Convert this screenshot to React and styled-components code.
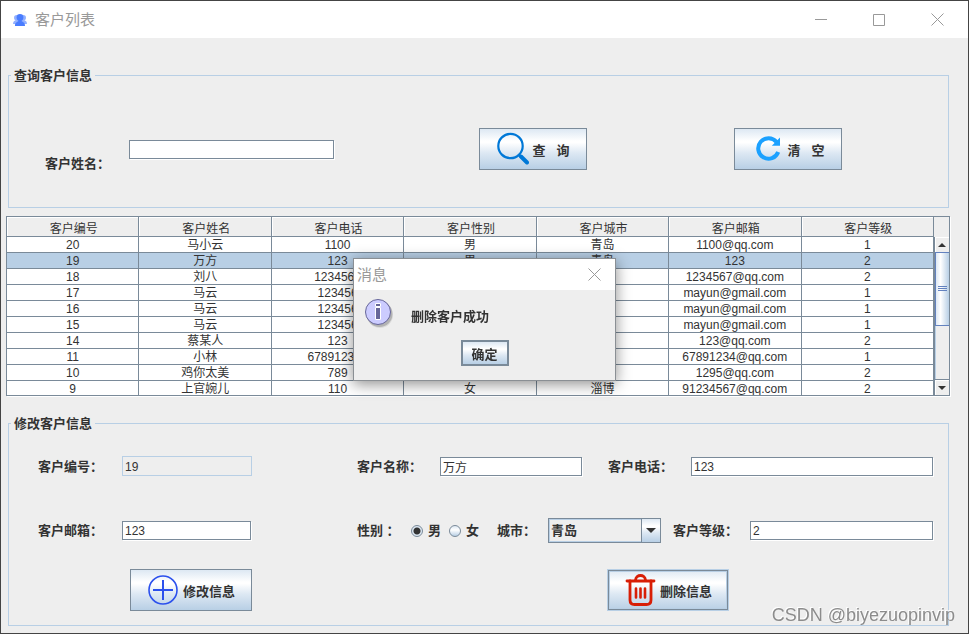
import React from "react"
import styled, { createGlobalStyle, css } from "styled-components"

const GlobalStyle = createGlobalStyle`
  * {
    box-sizing: border-box;
  }

  body {
    margin: 0;
    background: #eeeeee;
    color: #333333;
    font-family: "Liberation Sans", "Noto Sans CJK SC", sans-serif;
    font-size: 12px;
  }

  button,
  input,
  select {
    margin: 0;
    color: inherit;
    font: inherit;
  }
`

const Window = styled.div`
  display: flex;
  flex-direction: column;
  min-height: 100vh;
  border: 1px solid #444444;
`

const TitleBar = styled.header`
  display: flex;
  align-items: center;
  height: 37px;
  padding: 0 2px 0 12px;
  background: #ffffff;
`

const Title = styled.h1`
  flex: 1;
  margin: 0 0 0 8px;
  color: #999999;
  font-size: 15px;
  font-weight: 400;
  line-height: 20px;
`

const WindowButton = styled.button`
  display: flex;
  align-items: center;
  justify-content: center;
  width: ${props => (props.$small ? "42px" : "58px")};
  height: 30px;
  padding: 0;
  border: 0;
  background: none;
  color: #999999;
`

const Content = styled.main`
  padding: 29px 18px 7px 5px;
`

const Group = styled.fieldset`
  min-width: 0;
  height: ${props => props.$height};
  margin: 0 1px 0 2px;
  padding: 0;
  border: 1px solid #b8cfe5;
`

const Legend = styled.legend`
  margin-left: 2px;
  padding: 2px 3px 0;
  font-size: 13px;
  font-weight: 700;
  line-height: 14px;
`

const Label = styled.label`
  flex: none;
  width: ${props => props.$width};
  padding-top: 2px;
  font-size: 13px;
  font-weight: 700;
  line-height: 18px;
  white-space: nowrap;
`

const TextField = styled.input`
  flex: ${props => (props.$width ? "none" : "1")};
  width: ${props => props.$width || "auto"};
  min-width: 0;
  height: 19px;
  padding: 1px 2px 0;
  border: 1px solid #7a8a99;
  border-radius: 0;
  outline: 0;
  background: #ffffff;
  box-shadow: 1px 1px 0 #ffffff;

  &:disabled {
    height: 20px;
    border-color: #b8cfe5;
    background: #eeeeee;
    box-shadow: none;
    color: #333333;
  }
`

const metal = css`
  background: linear-gradient(
    #dde8f3 0%,
    #ffffff 30%,
    #ffffff 34%,
    #dde8f3 60%,
    #b8cfe5 100%
  );
`

const Button = styled.button`
  ${metal}
  display: flex;
  flex: none;
  align-items: center;
  justify-content: center;
  gap: 4px;
  width: ${props => props.$width};
  height: 42px;
  padding: 0;
  border: 1px solid #7a8a99;
  font-size: 13px;
  font-weight: 700;
  white-space: pre;

  ${props =>
    props.$focused &&
    css`
      border-color: #b8cfe5;
      box-shadow: inset 0 0 0 1px #7a8a99, inset 0 0 0 2px #b8cfe5;
    `}
`

const SearchRow = styled.div`
  display: flex;
  align-items: center;
  padding: 42px 106px 0 36px;
`

const SearchLabel = styled(Label)`
  margin-top: 28px;
`

const SearchButtons = styled.div`
  display: flex;
  flex: 1;
  justify-content: space-between;
  margin-left: 145px;
`

const TablePane = styled.div`
  display: flex;
  height: 180px;
  margin-top: 8px;
  overflow: hidden;
  border: 1px solid #7a8a99;
  box-shadow: 1px 1px 0 #ffffff;
`

const TableView = styled.div`
  flex: 1;
  min-width: 0;
`

const Table = styled.table`
  width: 100%;
  border-collapse: separate;
  border-spacing: 0;
  table-layout: fixed;
  background: #ffffff;
  text-align: center;
`

const HeadCell = styled.th`
  height: 20px;
  padding: 5px 0 0 2px;
  border-right: 1px solid #7a8a99;
  border-bottom: 1px solid #7a8a99;
  background: #eeeeee;
  box-shadow: inset 1px 1px 0 #ffffff;
  font-weight: 400;
  line-height: 14px;
`

const Row = styled.tr`
  background: ${props => (props.$selected ? "#b8cfe5" : "#ffffff")};
`

const Cell = styled.td`
  height: 16px;
  padding: 1px 0 0;
  border-right: 1px solid #7a8a99;
  border-bottom: 1px solid #7a8a99;
  line-height: 14px;
  white-space: nowrap;
`

const ScrollBar = styled.div`
  display: flex;
  flex: none;
  flex-direction: column;
  width: 15px;
  padding-top: 20px;
  background: #eeeeee;
`

const ScrollButton = styled.button`
  display: flex;
  align-items: center;
  justify-content: center;
  height: 15px;
  padding: 0;
  border: 0;
  border-left: 1px solid #7a8a99;
  background: #eeeeee;
  box-shadow: inset 1px 1px 0 #ffffff;
`

const Track = styled.div`
  flex: 1;
  border-bottom: 1px solid #7a8a99;
  border-left: 1px solid #7a8a99;
  box-shadow: inset 1px 0 0 #b8cfe5;
`

const Thumb = styled.div`
  display: flex;
  align-items: center;
  justify-content: center;
  height: 74px;
  border: 1px solid #6382bf;
  border-right: 0;
  background: linear-gradient(90deg, #dde8f3, #ffffff 35%, #b8cfe5);
`

const EditGroup = styled(Group)`
  margin-top: 19px;
`

const FormRow = styled.div`
  display: flex;
  align-items: center;
  height: 26px;
  margin-top: ${props => props.$top};
  padding: 0 15px 0 29px;
`

const MiddleLabel = styled(Label)`
  margin-left: ${props => props.$gap};
`

const Radio = styled.input`
  flex: none;
  width: 12px;
  height: 12px;
  margin-right: 5px;
  appearance: none;
  border: 1px solid #7a8a99;
  border-radius: 50%;
  background: linear-gradient(#dde8f3, #ffffff 40%, #b8cfe5);

  &:checked {
    background: radial-gradient(circle, #333333 3px, #dde8f3 4px);
  }
`

const RadioLabel = styled(Label)`
  display: flex;
  align-items: center;
`

const SelectBox = styled.div`
  display: flex;
  position: relative;
  flex: none;
  width: 113px;
  margin-right: 12px;
`

const Select = styled.select`
  width: 100%;
  height: 25px;
  padding: 0 2px;
  appearance: none;
  border: 1px solid #7a8a99;
  border-radius: 0;
  background: #eeeeee;
  box-shadow: inset 0 0 0 1px #b8cfe5;
  font-size: 13px;
  font-weight: 700;
`

const SelectArrow = styled.span`
  ${metal}
  display: flex;
  position: absolute;
  top: 0;
  right: 0;
  align-items: center;
  justify-content: center;
  width: 20px;
  height: 25px;
  border: 1px solid #7a8a99;
  pointer-events: none;
`

const Actions = styled.div`
  display: flex;
  justify-content: space-between;
  margin-top: 26px;
  padding: 0 219px 0 121px;
`

const Overlay = styled.div`
  display: flex;
  position: fixed;
  inset: 0;
  align-items: center;
  justify-content: center;
  padding-top: 5px;
`

const Dialog = styled.div`
  width: 263px;
  border: 1px solid #8a8f94;
  background: #eeeeee;
  box-shadow: 0 3px 14px rgba(0, 0, 0, 0.45);
`

const DialogBar = styled.div`
  display: flex;
  align-items: center;
  height: 31px;
  background: #ffffff;
`

const DialogTitle = styled.h2`
  flex: 1;
  margin: 0 0 0 3px;
  color: #999999;
  font-size: 15px;
  font-weight: 400;
  line-height: 20px;
`

const DialogBody = styled.div`
  display: flex;
  align-items: center;
  gap: 15px;
  padding: 8px 10px 0;
`

const Message = styled.p`
  margin: 6px 0 0;
  font-size: 13px;
  font-weight: 700;
  line-height: 18px;
`

const OkButton = styled(Button)`
  height: 26px;
  margin: 10px auto 14px;
  border: 2px solid #7a8a99;
`

const Watermark = styled.div`
  position: fixed;
  right: 14px;
  bottom: 8px;
  color: #8c8c8c;
  font-size: 18px;
  line-height: 22px;
  text-shadow: -1px -1px 0 #ffffff;
`

const columns = [
  "客户编号",
  "客户姓名",
  "客户电话",
  "客户性别",
  "客户城市",
  "客户邮箱",
  "客户等级",
]

const customers = [
  ["20", "马小云", "1100", "男", "青岛", "1100@qq.com", "1"],
  ["19", "万方", "123", "男", "青岛", "123", "2"],
  ["18", "刘八", "1234567", "", "", "1234567@qq.com", "2"],
  ["17", "马云", "123456", "", "", "mayun@gmail.com", "1"],
  ["16", "马云", "123456", "", "", "mayun@gmail.com", "1"],
  ["15", "马云", "123456", "", "", "mayun@gmail.com", "1"],
  ["14", "蔡某人", "123", "", "", "123@qq.com", "2"],
  ["11", "小林", "678912345", "", "", "67891234@qq.com", "1"],
  ["10", "鸡你太美", "789", "", "", "1295@qq.com", "2"],
  ["9", "上官婉儿", "110", "女", "淄博", "91234567@qq.com", "2"],
]

const UsersIcon = () => (
  <svg width="14" height="12" viewBox="0 0 14 12" fill="#4a7dff">
    <g opacity="0.6">
      <circle cx="3.800" cy="3.800" r="2.800" />
      <circle cx="10.200" cy="3.800" r="2.800" />
      <path d="M0 10C0 7 2 6 4 6h6c2 0 4 1 4 4z" />
    </g>
    <circle cx="7" cy="3.500" r="3.400" />
    <path d="M2 12C1.800 9 4 8 5.500 7V5h3v2c1.500 1 3.700 2 3.500 5z" />
  </svg>
)

const CloseIcon = () => (
  <svg width="13" height="13" viewBox="0 0 13 13" stroke="currentColor">
    <path d="M.5.5l12 12M12.500.5l-12 12" />
  </svg>
)

const SearchIcon = () => (
  <svg width="32" height="34" viewBox="0 0 32 34" fill="none" stroke="#0078d7">
    <circle cx="13.500" cy="14" r="12.200" strokeWidth="2.200" />
    <path d="M24 24.500l6 6" strokeWidth="4" strokeLinecap="round" />
    <path d="M21.500 22.500l3 3" strokeWidth="2.500" />
  </svg>
)

const RefreshIcon = () => (
  <svg width="32" height="32" viewBox="0 0 32 32">
    <path
      d="M24.500 8.900A10.300 10.300 0 1 0 26.200 19"
      fill="none"
      stroke="#1ba1ff"
      strokeWidth="4"
    />
    <path d="M28 4.500v8.200h-8.200z" fill="#1ba1ff" />
  </svg>
)

const AddIcon = () => (
  <svg width="32" height="32" viewBox="0 0 32 32" fill="none" stroke="#2b50ed">
    <circle cx="16" cy="16" r="14" strokeWidth="1.600" />
    <path d="M16 6v20M6 16h20" strokeWidth="2" />
  </svg>
)

const TrashIcon = () => (
  <svg
    width="32"
    height="34"
    viewBox="0 0 32 34"
    fill="none"
    stroke="#d81e06"
    strokeWidth="2.800"
    strokeLinecap="round"
  >
    <path d="M3 8h27" />
    <path d="M11.500 7C12 1 21 1 21.500 7" />
    <path d="M6 8v19q0 4.500 4.500 4.500h12q4.500 0 4.500-4.500V8" />
    <path d="M12 15.500v9M16.500 15.500v9M21 15.500v9" strokeWidth="2.600" />
  </svg>
)

const InfoIcon = () => (
  <svg width="32" height="32" viewBox="0 0 32 32">
    <circle cx="16" cy="17" r="13" fill="#000000" opacity="0.08" />
    <circle cx="15.500" cy="16" r="13" fill="#000000" opacity="0.18" />
    <circle cx="14" cy="14" r="12.500" fill="#ccccff" stroke="#666699" />
    <path
      d="M11.500 5.500h5v3h-5zM11.500 9.500h5v12h-5z"
      fill="#666699"
      stroke="#ffffff"
    />
  </svg>
)

const Arrow = ({ up, size = 8 }) => (
  <svg width={size} height={size / 2} viewBox="0 0 8 4" fill="#333333">
    <path d={up ? "M0 4l4-4 4 4z" : "M0 0l4 4 4-4z"} />
  </svg>
)

function CustomerTable() {
  return (
    <TablePane>
      <TableView>
        <Table>
          <thead>
            <tr>
              {columns.map(name => (
                <HeadCell key={name}>{name}</HeadCell>
              ))}
            </tr>
          </thead>
          <tbody>
            {customers.map(row => (
              <Row key={row[0]} $selected={row[0] === "19"}>
                {row.map((value, i) => (
                  <Cell key={columns[i]}>{value}</Cell>
                ))}
              </Row>
            ))}
          </tbody>
        </Table>
      </TableView>
      <ScrollBar>
        <ScrollButton aria-label="向上">
          <Arrow up />
        </ScrollButton>
        <Track>
          <Thumb>
            <svg width="9" height="6" viewBox="0 0 9 6" stroke="#6382bf">
              <path d="M0 .5h9M0 2.500h9M0 4.500h9" />
            </svg>
          </Thumb>
        </Track>
        <ScrollButton aria-label="向下">
          <Arrow />
        </ScrollButton>
      </ScrollBar>
    </TablePane>
  )
}

function EditForm() {
  return (
    <EditGroup $height="211px">
      <Legend>修改客户信息</Legend>
      <FormRow $top="22px">
        <Label htmlFor="id" $width="84px">
          客户编号：
        </Label>
        <TextField id="id" $width="130px" defaultValue="19" disabled />
        <MiddleLabel htmlFor="name" $gap="105px" $width="83px">
          客户名称：
        </MiddleLabel>
        <TextField id="name" $width="142px" defaultValue="万方" />
        <MiddleLabel htmlFor="phone" $gap="26px" $width="83px">
          客户电话：
        </MiddleLabel>
        <TextField id="phone" defaultValue="123" />
      </FormRow>
      <FormRow $top="38px">
        <Label htmlFor="email" $width="84px">
          客户邮箱：
        </Label>
        <TextField id="email" $width="129px" defaultValue="123" />
        <MiddleLabel as="span" $gap="106px" $width="54px">
          性别 ：
        </MiddleLabel>
        <RadioLabel $width="38px">
          <Radio type="radio" name="gender" defaultChecked />男
        </RadioLabel>
        <RadioLabel $width="48px">
          <Radio type="radio" name="gender" />女
        </RadioLabel>
        <Label htmlFor="city" $width="51px">
          城市：
        </Label>
        <SelectBox>
          <Select id="city" defaultValue="青岛">
            <option>青岛</option>
            <option>淄博</option>
          </Select>
          <SelectArrow>
            <Arrow size={10} />
          </SelectArrow>
        </SelectBox>
        <Label htmlFor="level" $width="77px">
          客户等级：
        </Label>
        <TextField id="level" defaultValue="2" />
      </FormRow>
      <Actions>
        <Button $width="122px">
          <AddIcon />
          修改信息
        </Button>
        <Button $width="122px" $focused>
          <TrashIcon />
          删除信息
        </Button>
      </Actions>
    </EditGroup>
  )
}

function MessageDialog() {
  return (
    <Overlay>
      <Dialog role="dialog" aria-labelledby="dialog-title">
        <DialogBar>
          <DialogTitle id="dialog-title">消息</DialogTitle>
          <WindowButton $small aria-label="关闭">
            <CloseIcon />
          </WindowButton>
        </DialogBar>
        <DialogBody>
          <InfoIcon />
          <Message>删除客户成功</Message>
        </DialogBody>
        <OkButton $width="48px">确定</OkButton>
      </Dialog>
    </Overlay>
  )
}

function App() {
  return (
    <>
      <GlobalStyle />
      <Window>
        <TitleBar>
          <UsersIcon />
          <Title>客户列表</Title>
          <WindowButton aria-label="最小化">
            <svg width="12" height="12" stroke="currentColor">
              <path d="M0 5.500h12" />
            </svg>
          </WindowButton>
          <WindowButton aria-label="最大化">
            <svg width="12" height="12" fill="none" stroke="currentColor">
              <path d="M.5.5h11v11H.5z" />
            </svg>
          </WindowButton>
          <WindowButton aria-label="关闭">
            <CloseIcon />
          </WindowButton>
        </TitleBar>
        <Content>
          <Group $height="141px">
            <Legend>查询客户信息</Legend>
            <SearchRow>
              <SearchLabel htmlFor="query" $width="84px">
                客户姓名：
              </SearchLabel>
              <TextField id="query" $width="205px" />
              <SearchButtons>
                <Button $width="108px">
                  <SearchIcon />
                  {"查   询"}
                </Button>
                <Button $width="108px">
                  <RefreshIcon />
                  {"清   空"}
                </Button>
              </SearchButtons>
            </SearchRow>
          </Group>
          <CustomerTable />
          <EditForm />
        </Content>
      </Window>
      <MessageDialog />
      <Watermark>CSDN @biyezuopinvip</Watermark>
    </>
  )
}

export default App
